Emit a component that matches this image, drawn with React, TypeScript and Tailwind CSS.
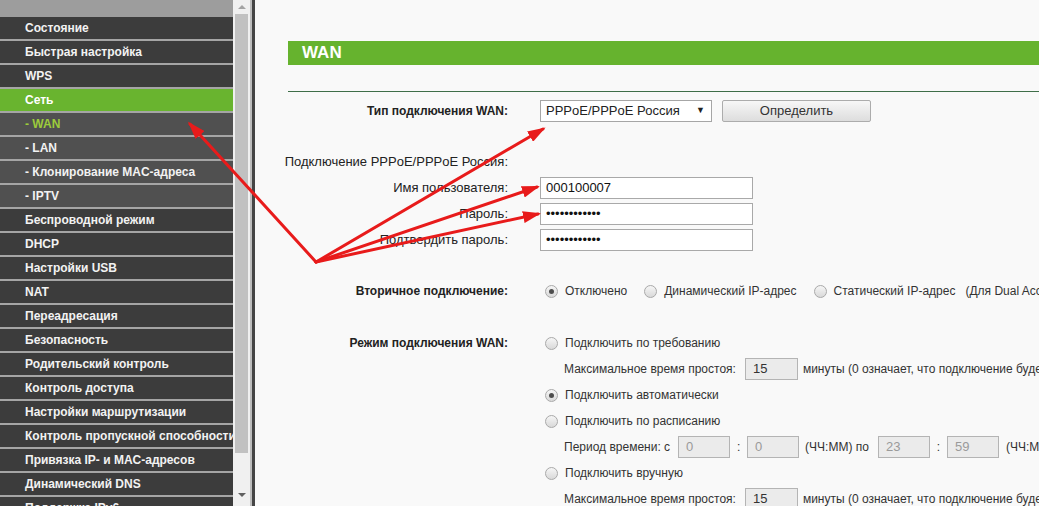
import React from 'react';

type Item = { t: string; kind?: 'active' | 'sub' | 'subActive' };

const menu: Item[] = [
  { t: 'Состояние' },
  { t: 'Быстрая настройка' },
  { t: 'WPS' },
  { t: 'Сеть', kind: 'active' },
  { t: '- WAN', kind: 'subActive' },
  { t: '- LAN', kind: 'sub' },
  { t: '- Клонирование MAC-адреса', kind: 'sub' },
  { t: '- IPTV', kind: 'sub' },
  { t: 'Беспроводной режим' },
  { t: 'DHCP' },
  { t: 'Настройки USB' },
  { t: 'NAT' },
  { t: 'Переадресация' },
  { t: 'Безопасность' },
  { t: 'Родительский контроль' },
  { t: 'Контроль доступа' },
  { t: 'Настройки маршрутизации' },
  { t: 'Контроль пропускной способности' },
  { t: 'Привязка IP- и MAC-адресов' },
  { t: 'Динамический DNS' },
  { t: 'Поддержка IPv6' },
];

function Radio({ checked }: { checked?: boolean }) {
  return (
    <span className="ml-[5px] mr-[7px] inline-flex h-[13px] w-[13px] shrink-0 items-center justify-center rounded-full border border-[#a9a9a9] bg-linear-to-b from-[#f6f6f6] to-[#d9d9d9]">
      {checked && <span className="h-[5px] w-[5px] rounded-full bg-[#4d4d4d]" />}
    </span>
  );
}

function Field({ value, w, muted }: { value: string; w: string; muted?: boolean }) {
  return (
    <span
      className={`inline-flex h-[22px] ${w} shrink-0 items-center border border-[#b4b4b4] bg-[#ebebeb] pl-[7px] text-[13px] ${
        muted ? 'text-[#9a9a9a]' : 'text-[#333]'
      }`}
    >
      {value}
    </span>
  );
}

function Label({ children, bold }: { children: React.ReactNode; bold?: boolean }) {
  return (
    <div
      className={`flex h-[26px] w-[220px] shrink-0 items-center justify-end text-[#222] ${
        bold ? 'text-[12px] font-bold' : 'text-[13px]'
      }`}
    >
      {children}
    </div>
  );
}

export default function App() {
  return (
    <div className="relative flex h-[506px] w-[1039px] overflow-hidden bg-[#f9f9f9] font-['Liberation_Sans',Arial,sans-serif] text-[12px]">
      {/* sidebar */}
      <div className="w-[233px] shrink-0 overflow-hidden bg-[#a5a5a5]">
        <div className="h-[17px] bg-[#9d9d9d]" />
        {menu.map((m) => (
          <div
            key={m.t}
            className={`mb-[2px] flex h-[22px] items-center whitespace-nowrap pl-[25px] text-[12px] font-bold ${
              m.kind === 'active'
                ? 'bg-[#69b42f] text-white'
                : m.kind === 'sub'
                ? 'bg-[#505050] text-[#f2f2f2]'
                : m.kind === 'subActive'
                ? 'bg-[#505050] text-[#9ccb3b]'
                : 'bg-[#3c3c3c] text-[#f2f2f2]'
            }`}
          >
            {m.t}
          </div>
        ))}
      </div>

      {/* scrollbar */}
      <div className="flex w-[17px] shrink-0 flex-col items-center bg-[#f0f0f0]">
        <div className="mt-[5px] h-0 w-0 border-x-[4px] border-b-[4px] border-x-transparent border-b-[#a3a3a3]" />
        <div className="mt-[5px] h-[439px] w-[13px] bg-[#c1c1c1]" />
        <div className="mt-[40px] h-0 w-0 border-x-[4px] border-t-[4px] border-x-transparent border-t-[#606060]" />
      </div>
      <div className="w-[2px] shrink-0 bg-[#bdbdbd]" />
      <div className="w-[3px] shrink-0 bg-[#454545]" />

      {/* content */}
      <div className="min-w-0 flex-1 overflow-hidden whitespace-nowrap pl-[33px] text-[#333]">
        <div className="mt-[41px] flex h-[24px] items-center bg-[#66b32e] pl-[14px] text-[17px] font-bold text-white">WAN</div>
        <div className="mt-[26px] h-px bg-[#3f6e49]" />

        <div className="mt-[6px] flex">
          <Label bold>Тип подключения WAN:</Label>
          <div className="ml-[32px] flex h-[26px] items-center">
            <div className="flex h-[22px] w-[172px] items-center justify-between border border-[#a6a6a6] bg-white pl-[5px] pr-[6px] text-[13px] text-[#222]">
              <span>PPPoE/PPPoE Россия</span>
              <span className="text-[9px] text-[#222]">▼</span>
            </div>
            <button className="ml-[10px] flex h-[22px] w-[149px] items-center justify-center rounded-[2px] border border-[#acacac] bg-linear-to-b from-[#f7f7f7] to-[#dddddd] text-[13px] text-[#333]">
              Определить
            </button>
          </div>
        </div>

        <div className="mt-[25px] flex">
          <Label>Подключение PPPoE/PPPoE Россия:</Label>
        </div>
        {[
          ['Имя пользователя:', '000100007'],
          ['Пароль:', '••••••••••••'],
          ['Подтвердить пароль:', '••••••••••••'],
        ].map(([l, v]) => (
          <div key={l} className="flex">
            <Label>{l}</Label>
            <div className="ml-[32px] flex h-[26px] items-center">
              <div className="flex h-[22px] w-[213px] items-center border border-[#a9a9a9] bg-white pl-[5px] text-[13px] text-[#111]">
                {v}
              </div>
            </div>
          </div>
        ))}

        <div className="mt-[25px] flex">
          <Label bold>Вторичное подключение:</Label>
          <div className="ml-[32px] flex h-[26px] items-center">
            <Radio checked />
            <span>Отключено</span>
            <span className="w-[12px]" />
            <Radio />
            <span>Динамический IP-адрес</span>
            <span className="w-[12px]" />
            <Radio />
            <span>Статический IP-адрес</span>
            <span className="ml-[10px]">(Для Dual Access)</span>
          </div>
        </div>

        <div className="mt-[26px] flex">
          <Label bold>Режим подключения WAN:</Label>
          <div className="ml-[32px] flex flex-col">
            <div className="flex h-[26px] items-center">
              <Radio />
              <span>Подключить по требованию</span>
            </div>
            <div className="flex h-[26px] items-center pl-[24px]">
              <span>Максимальное время простоя:</span>
              <span className="ml-[9px]" />
              <Field value="15" w="w-[53px]" />
              <span className="ml-[5px]">минуты (0 означает, что подключение будет активно всегда)</span>
            </div>
            <div className="flex h-[26px] items-center">
              <Radio checked />
              <span>Подключить автоматически</span>
            </div>
            <div className="flex h-[26px] items-center">
              <Radio />
              <span>Подключить по расписанию</span>
            </div>
            <div className="flex h-[26px] items-center pl-[24px]">
              <span>Период времени: с</span>
              <span className="ml-[8px]" />
              <Field value="0" w="w-[52px]" muted />
              <span className="w-[17px] text-center">:</span>
              <Field value="0" w="w-[52px]" muted />
              <span className="ml-[6px]">(ЧЧ:ММ) по</span>
              <span className="ml-[9px]" />
              <Field value="23" w="w-[52px]" muted />
              <span className="w-[17px] text-center">:</span>
              <Field value="59" w="w-[52px]" muted />
              <span className="ml-[7px]">(ЧЧ:ММ)</span>
            </div>
            <div className="flex h-[26px] items-center">
              <Radio />
              <span>Подключить вручную</span>
            </div>
            <div className="flex h-[26px] items-center pl-[24px]">
              <span>Максимальное время простоя:</span>
              <span className="ml-[9px]" />
              <Field value="15" w="w-[53px]" />
              <span className="ml-[5px]">минуты (0 означает, что подключение будет активно всегда)</span>
            </div>
          </div>
        </div>
      </div>

      {/* annotation arrows */}
      <svg className="pointer-events-none absolute left-0 top-0" width="1039" height="506" viewBox="0 0 1039 506">
        <defs>
          <marker id="ah" markerWidth="6" markerHeight="4" refX="5" refY="2" orient="auto" markerUnits="strokeWidth">
            <path d="M0,0 L6,2 L0,4 z" fill="#e81b1b" />
          </marker>
        </defs>
        <g stroke="#e81b1b" strokeWidth="3" strokeLinecap="round" fill="none">
          <line x1="316" y1="262" x2="190" y2="124" markerEnd="url(#ah)" />
          <line x1="316" y1="262" x2="543" y2="129" markerEnd="url(#ah)" />
          <line x1="316" y1="262" x2="537" y2="187" markerEnd="url(#ah)" />
          <line x1="316" y1="262" x2="538" y2="214" markerEnd="url(#ah)" />
        </g>
      </svg>
    </div>
  );
}
